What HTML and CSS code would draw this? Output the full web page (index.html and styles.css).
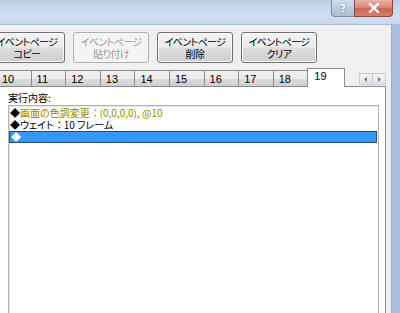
FILE: index.html
```html
<!DOCTYPE html>
<html lang="ja">
<head>
<meta charset="utf-8">
<link rel="stylesheet" href="styles.css">
</head>
<body>
<div class="window">
  <div class="titlebar">
    <div class="caption-buttons">
      <div class="cap-btn help">?</div>
      <div class="cap-btn close">
        <svg width="12" height="10" viewBox="0 0 12 10"><path d="M2 1 L10 9 M10 1 L2 9" stroke="#fff" stroke-width="2.4" stroke-linecap="square"/></svg>
      </div>
    </div>
  </div>
  <div class="client">
    <div class="button-row">
      <div class="btn">イベントページ<br>コピー</div>
      <div class="btn disabled">イベントページ<br>貼り付け</div>
      <div class="btn">イベントページ<br>削除</div>
      <div class="btn">イベントページ<br>クリア</div>
    </div>
    <div class="tabstrip">
      <div class="tabs">
        <div class="tab">10</div>
        <div class="tab">11</div>
        <div class="tab">12</div>
        <div class="tab">13</div>
        <div class="tab">14</div>
        <div class="tab">15</div>
        <div class="tab">16</div>
        <div class="tab">17</div>
        <div class="tab">18</div>
        <div class="tab selected">19</div>
      </div>
      <div class="scroll-arrows">
        <div class="arrow"><svg width="4" height="5" viewBox="0 0 4 5"><path d="M3 0 L0 2.5 L3 5 Z" fill="#6a7a90"/></svg></div>
        <div class="arrow"><svg width="4" height="5" viewBox="0 0 4 5"><path d="M1 0 L4 2.5 L1 5 Z" fill="#6a7a90"/></svg></div>
      </div>
    </div>
    <div class="panel">
      <div class="label">実行内容:</div>
      <div class="listbox">
        <div class="row"><span class="mark">◆</span><span class="olive">画面の色調変更<span class="colon">：</span>(0,0,0,0), @10</span></div>
        <div class="row"><span class="mark">◆</span>ウェイト<span class="colon">：</span>10 フレーム</div>
        <div class="row sel"><span class="mark">◆</span></div>
      </div>
    </div>
  </div>
</div>
</body>
</html>
```
FILE: styles.css
```css
html, body {
  margin: 0;
  padding: 0;
}
body {
  width: 400px;
  height: 313px;
  overflow: hidden;
  background: #a9c1de;
  font-family: "Noto Sans CJK JP", "Noto Sans", sans-serif;
  font-feature-settings: "palt" 1;
  font-size: 10px;
  color: #000;
}
.window {
  display: flex;
  flex-direction: column;
  height: 313px;
}
.titlebar {
  height: 24px;
  flex: none;
  background: linear-gradient(180deg, #b7cbe3 0%, #c9d9ed 35%, #d2dff0 70%, #c8d8ec 100%);
  display: flex;
  justify-content: flex-end;
  padding-right: 7px;
}
.caption-buttons {
  display: flex;
  height: 17px;
}
.cap-btn {
  height: 16px;
  border: 1px solid #7d8fa6;
  border-top: none;
  display: flex;
  align-items: center;
  justify-content: center;
  font-family: "DejaVu Sans", sans-serif;
  font-weight: bold;
  font-size: 10px;
  color: #fff;
}
.help {
  width: 22px;
  border-radius: 0 0 0 4px;
  background: linear-gradient(180deg, #d3deeb 0%, #bccbdd 50%, #aebfd4 100%);
  text-shadow: 0 0 2px #4a607c;
  border-right: none;
}
.close {
  width: 37px;
  border-radius: 0 0 4px 0;
  border-color: #8a4a40;
  background: linear-gradient(180deg, #e6b2a8 0%, #d98a78 45%, #cc6650 55%, #d88068 100%);
}
.client {
  flex: 1;
  margin-right: 8px;
  background: #f0f0f0;
  border-top: 1px solid #a7b9cf;
  border-right: 1px solid #9aaec6;
  overflow: hidden;
}
.button-row {
  display: flex;
  gap: 8px;
  margin-left: -11px;
  padding-top: 7px;
}
.btn {
  width: 74px;
  height: 26px;
  border: 1px solid #707070;
  border-radius: 3px;
  background: linear-gradient(180deg, #f2f2f2 0%, #ebebeb 48%, #dddddd 52%, #cfcfcf 100%);
  box-shadow: inset 0 0 0 1px #fcfcfc;
  text-align: center;
  line-height: 12px;
  padding-top: 3px;
  font-size: 10px;
  letter-spacing: -0.6px;
  white-space: nowrap;
  color: #000;
}
.btn.disabled {
  border-color: #adb2b5;
  background: #f4f4f4;
  box-shadow: none;
  color: #9a9a9a;
}
.tabstrip {
  display: flex;
  align-items: flex-end;
  margin-top: 5px;
  height: 18px;
  position: relative;
  z-index: 1;
}
.tabs {
  display: flex;
  margin-left: -4px;
  align-items: flex-end;
}
.tab {
  width: 35.6px;
  height: 16px;
  border: 1px solid #898c95;
  border-bottom: none;
  margin-right: -1px;
  background: linear-gradient(180deg, #f2f2f2 0%, #ebebeb 50%, #dcdcdc 51%, #cfcfcf 100%);
  padding-left: 5px;
  box-sizing: border-box;
  line-height: 16px;
  font-family: "Liberation Sans", Arial, sans-serif;
  font-size: 11px;
}
.tab.selected {
  width: 38px;
  height: 19px;
  background: #fff;
  padding-left: 6px;
  line-height: 15px;
  margin-bottom: -1px;
  margin-right: 0;
}
.scroll-arrows {
  display: flex;
  margin-left: 14px;
  align-self: flex-start;
  margin-top: 5px;
}
.arrow {
  width: 12px;
  height: 10px;
  border: 1px solid #c7ccd3;
  background: linear-gradient(180deg, #f4f5f7, #dde1e6);
  display: flex;
  align-items: center;
  justify-content: center;
  margin-right: -1px;
}
.panel {
  margin-left: -1px;
  width: 387px;
  height: 240px;
  border: 1px solid #898c95;
  background: #fff;
  box-sizing: border-box;
  padding: 5px 0 0 8px;
}
.label {
  height: 13px;
  line-height: 12px;
  font-size: 10px;
}
.listbox {
  width: 371px;
  height: 230px;
  border: 1px solid #b5b5b5;
  box-shadow: inset 1px 1px 0 #e3e3e3;
  box-sizing: border-box;
  padding: 0 1px 0 1px;
}
.row {
  height: 12px;
  line-height: 12px;
  font-size: 10px;
  white-space: nowrap;
}
.row:first-child {
  margin-top: 1px;
}
.mark {
  font-size: 10px;
}
.colon {
  padding: 0 2px 0 3px;
}
.olive {
  color: #8c8c00;
}
.row.sel {
  background: #3399ff;
  border: 1px solid #2a4a70;
  color: #fff;
  line-height: 10px;
  box-sizing: border-box;
  margin-left: -1px;
  padding-left: 1px;
}
```
